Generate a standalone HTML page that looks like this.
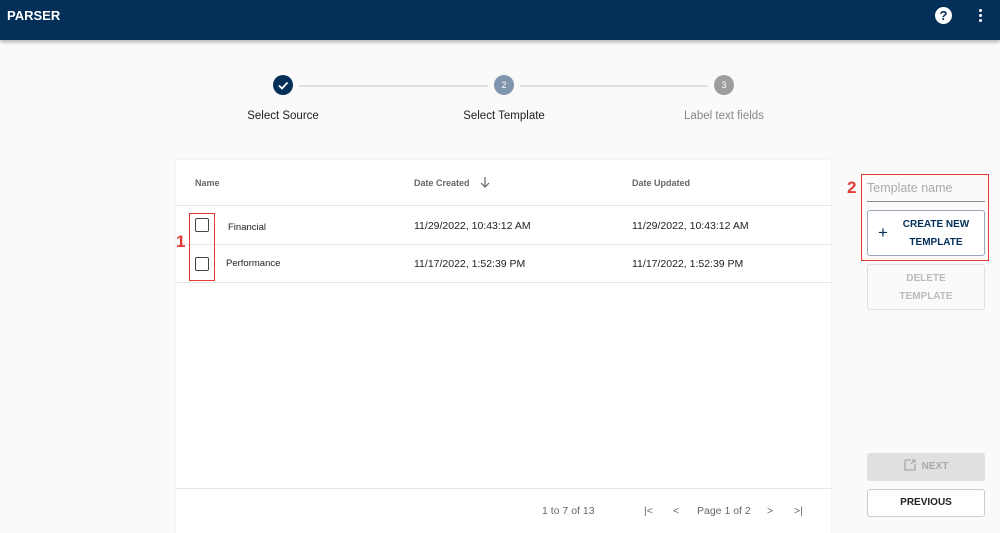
<!DOCTYPE html>
<html><head><style>
*{box-sizing:border-box;margin:0;padding:0}
body{width:1000px;height:533px;overflow:hidden;background:#fafafa;font-family:"Liberation Sans",sans-serif;position:relative}
.hdr{position:absolute;left:0;top:0;width:1000px;height:40px;background:#032f58;box-shadow:0 2px 4px rgba(0,0,0,.3)}
.hdr .t{position:absolute;left:7px;top:8px;color:#fff;font-weight:bold;font-size:13px}
.a{position:absolute}
.circ{position:absolute;width:20px;height:20px;border-radius:50%;color:#fff;font-size:9px;text-align:center;line-height:20px}
.line{position:absolute;height:2px;background:#e0e0e0;top:85px}
.lbl{position:absolute;top:110px;font-size:11.5px;color:#222;transform:translateX(-50%);white-space:nowrap}
.card{position:absolute;left:176px;top:160px;width:655px;height:373px;background:#fff;box-shadow:0 0 2px rgba(0,0,0,.08)}
.hl{position:absolute;left:0;width:655px;height:1px;background:#e6e6e6}
.th{position:absolute;top:178px;font-size:9px;font-weight:bold;color:#666}
.td{position:absolute;font-size:10.5px;color:#222}
.cb{position:absolute;left:195px;width:14px;height:14px;border:1.6px solid #444;border-radius:2px}
.red{position:absolute;border:1.5px solid #e53935}
.btn{position:absolute;border:1px solid #c8ccd2;border-radius:3px;background:#fff;font-size:10px;font-weight:bold;text-align:center}
.pg{position:absolute;top:505px;font-size:10.5px;color:#666}
</style></head><body>
<div class="hdr"><div class="t">PARSER</div>
<div class="a" style="left:935px;top:7px;width:17px;height:17px;border-radius:50%;background:#fff;color:#032f58;font-weight:bold;font-size:13px;text-align:center;line-height:17px">?</div>
<div class="a" style="left:979px;top:9px;width:3px;height:3px;background:#fff;border-radius:50%;box-shadow:0 5px 0 #fff,0 10px 0 #fff"></div>
</div>
<div class="circ" style="left:273px;top:75px;background:#032f58"><svg width="20" height="20"><path d="M6 10.5l3 3 5.5-6" stroke="#fff" stroke-width="1.8" fill="none"/></svg></div>
<div class="line" style="left:299px;width:189px"></div>
<div class="circ" style="left:494px;top:75px;background:#7f95ad">2</div>
<div class="line" style="left:520px;width:188px"></div>
<div class="circ" style="left:714px;top:75px;background:#9e9e9e">3</div>
<div class="lbl" style="left:283px">Select Source</div>
<div class="lbl" style="left:504px">Select Template</div>
<div class="lbl" style="left:724px;color:#888">Label text fields</div>
<div class="card">
<div class="hl" style="top:45px"></div><div class="hl" style="top:84px"></div><div class="hl" style="top:122px"></div><div class="hl" style="top:328px"></div>
</div>
<div class="th" style="left:195px">Name</div>
<div class="th" style="left:414px">Date Created</div>
<svg class="a" style="left:479px;top:176px" width="12" height="13"><path d="M6 1v10M2 7l4 4 4-4" stroke="#666" stroke-width="1.2" fill="none"/></svg>
<div class="th" style="left:632px">Date Updated</div>
<div class="cb" style="top:218px"></div><div class="cb" style="top:257px"></div>
<div class="td" style="left:228px;top:222px;font-size:9.5px">Financial</div>
<div class="td" style="left:226px;top:258px;font-size:9.5px">Performance</div>
<div class="td" style="left:414px;top:220px">11/29/2022, 10:43:12 AM</div>
<div class="td" style="left:632px;top:220px">11/29/2022, 10:43:12 AM</div>
<div class="td" style="left:414px;top:258px">11/17/2022, 1:52:39 PM</div>
<div class="td" style="left:632px;top:258px">11/17/2022, 1:52:39 PM</div>
<div class="red" style="left:189px;top:213px;width:26px;height:68px"></div>
<div class="a" style="left:176px;top:232px;color:#e53935;font-weight:bold;font-size:17px">1</div>
<div class="pg" style="left:542px">1 to 7 of 13</div>
<div class="pg" style="left:644px">|&lt;</div>
<div class="pg" style="left:673px">&lt;</div>
<div class="pg" style="left:697px">Page 1 of 2</div>
<div class="pg" style="left:767px">&gt;</div>
<div class="pg" style="left:794px">&gt;|</div>
<div class="a" style="left:847px;top:178px;color:#e53935;font-weight:bold;font-size:17px">2</div>
<div class="red" style="left:861px;top:174px;width:128px;height:87px"></div>
<div class="a" style="left:867px;top:181px;font-size:12.5px;color:#aaa">Template name</div>
<div class="a" style="left:867px;top:201px;width:118px;height:1px;background:#888"></div>
<div class="btn" style="left:867px;top:210px;width:118px;height:46px;color:#032f58;border-color:#9aa8b8;line-height:18px;padding-top:5px;padding-left:20px">CREATE NEW<br>TEMPLATE</div>
<div class="a" style="left:878px;top:223px;font-size:17px;color:#032f58">+</div>
<div class="btn" style="left:867px;top:264px;width:118px;height:46px;color:#bbb;border-color:#e0e0e0;background:#fafafa;line-height:18px;padding-top:5px">DELETE<br>TEMPLATE</div>
<div class="btn" style="left:867px;top:453px;width:118px;height:28px;background:#e0e0e0;border-color:#e0e0e0;color:#aaa;line-height:26px"><svg width="12" height="12" style="vertical-align:-2px;margin-right:6px"><path d="M1 1h6M1 1v10h10V5M7 5l4-4M8 1h3v3" stroke="#aaa" stroke-width="1.3" fill="none"/></svg>NEXT</div>
<div class="btn" style="left:867px;top:489px;width:118px;height:28px;color:#222;line-height:26px">PREVIOUS</div>
</body></html>
